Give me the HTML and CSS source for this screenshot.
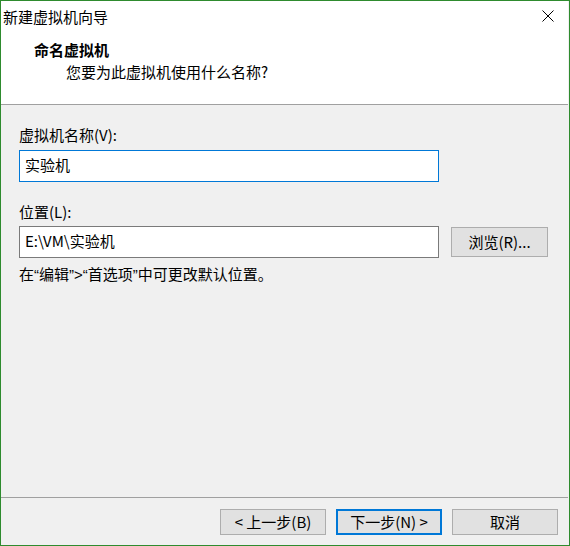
FILE: index.html
```html
<!DOCTYPE html>
<html lang="zh-CN">
<head>
<meta charset="utf-8">
<title>新建虚拟机向导</title>
<link rel="stylesheet" href="styles.css">
</head>
<body>
<div class="window">
  <div class="header">
    <div class="titlebar">
      <span class="title">新建虚拟机向导</span>
      <svg class="close" width="12" height="12" viewBox="0 0 12 12"><path d="M0.5 0.5 L11.5 11.5 M11.5 0.5 L0.5 11.5" stroke="#000" stroke-width="1" fill="none"/></svg>
    </div>
    <div class="heading">命名虚拟机</div>
    <div class="subheading">您要为此虚拟机使用什么名称?</div>
  </div>
  <div class="content">
    <div class="label first">虚拟机名称(V):</div>
    <div class="field focused">实验机</div>
    <div class="label second">位置(L):</div>
    <div class="row">
      <div class="field">E:\VM\实验机</div>
      <div class="btn browse">浏览(R)...</div>
    </div>
    <div class="hint">在<span class="lat">“</span>编辑<span class="lat">”&gt;“</span>首选项<span class="lat">”</span>中可更改默认位置。</div>
  </div>
  <div class="footer">
    <div class="btn">&lt; 上一步(B)</div>
    <div class="btn default">下一步(N) &gt;</div>
    <div class="btn">取消</div>
  </div>
</div>
</body>
</html>
```

FILE: styles.css
```css
html, body {
  margin: 0;
  padding: 0;
}
body {
  font-family: "Noto Sans CJK SC", "Noto Sans", sans-serif;
  font-size: 15px;
  color: #000;
  background: #f0f0f0;
}
.window {
  width: 570px;
  height: 546px;
  box-sizing: border-box;
  border: 1px solid #2e8b2e;
  background: #f0f0f0;
  display: flex;
  flex-direction: column;
}
.header {
  background: #fff;
  height: 104px;
  box-sizing: border-box;
  border-bottom: 1px solid #a0a0a0;
  margin-right: 1px;
}
.titlebar {
  height: 32px;
  display: flex;
  align-items: center;
  justify-content: space-between;
  padding: 0 14px 0 2px;
  line-height: 20px;
}
.close {
  display: block;
  margin-top: -2px;
}
.heading {
  font-weight: bold;
  line-height: 20px;
  margin-top: 7px;
  padding-left: 33px;
}
.subheading {
  line-height: 20px;
  margin-top: 2px;
  padding-left: 65px;
}
.content {
  flex: 1;
  padding: 20px 0 0 18px;
}
.label {
  line-height: 20px;
}
.label.second {
  margin-top: 20px;
}
.field {
  width: 420px;
  height: 32px;
  box-sizing: border-box;
  border: 1px solid #7a7a7a;
  background: #fff;
  padding: 3px 5px 0;
  line-height: 22px;
  margin-top: 5px;
}
.field.focused {
  border-color: #0078d7;
}
.row {
  display: flex;
  align-items: center;
  gap: 12px;
  margin-top: 4px;
}
.row .field {
  margin-top: 0;
}
.btn {
  box-sizing: border-box;
  border: 1px solid #adadad;
  background: #e1e1e1;
  display: flex;
  align-items: center;
  justify-content: center;
  line-height: 20px;
}
.browse {
  width: 97px;
  height: 30px;
}
.hint {
  line-height: 20px;
  margin-top: 6px;
}
.lat {
  font-family: "Liberation Sans", sans-serif;
}
.footer {
  height: 48px;
  box-sizing: border-box;
  border-top: 1px solid #a0a0a0;
  margin-right: 1px;
  display: flex;
  justify-content: flex-end;
  align-items: flex-start;
  gap: 10px;
  padding: 11px 10px 0 0;
}
.footer .btn {
  width: 106px;
  height: 26px;
}
.footer .btn.default {
  border: 2px solid #0078d7;
}
```
